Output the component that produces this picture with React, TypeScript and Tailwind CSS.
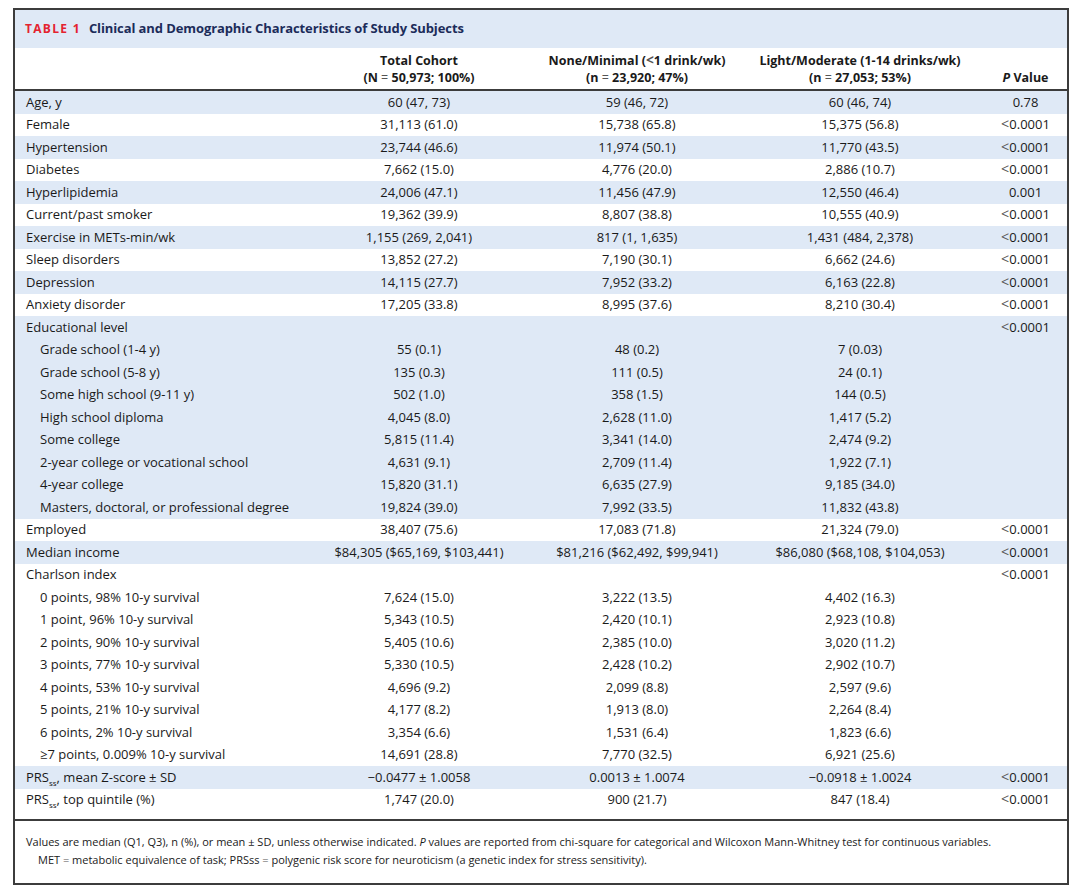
import React from "react";

type Row = { label: React.ReactNode; v: string[]; p?: string; sub?: boolean };
type Group = { rows: Row[] };

const LT = () => <span className="text-[#555] text-[1.1em] leading-none">&lt;</span>;

const PRS = () => (
  <>
    PRS<sub className="text-[8px] align-[-2px]">ss</sub>
  </>
);

const groups: Group[] = [
  { rows: [{ label: "Age, y", v: ["60 (47, 73)", "59 (46, 72)", "60 (46, 74)"], p: "0.78" }] },
  { rows: [{ label: "Female", v: ["31,113 (61.0)", "15,738 (65.8)", "15,375 (56.8)"], p: "<0.0001" }] },
  { rows: [{ label: "Hypertension", v: ["23,744 (46.6)", "11,974 (50.1)", "11,770 (43.5)"], p: "<0.0001" }] },
  { rows: [{ label: "Diabetes", v: ["7,662 (15.0)", "4,776 (20.0)", "2,886 (10.7)"], p: "<0.0001" }] },
  { rows: [{ label: "Hyperlipidemia", v: ["24,006 (47.1)", "11,456 (47.9)", "12,550 (46.4)"], p: "0.001" }] },
  { rows: [{ label: "Current/past smoker", v: ["19,362 (39.9)", "8,807 (38.8)", "10,555 (40.9)"], p: "<0.0001" }] },
  { rows: [{ label: "Exercise in METs-min/wk", v: ["1,155 (269, 2,041)", "817 (1, 1,635)", "1,431 (484, 2,378)"], p: "<0.0001" }] },
  { rows: [{ label: "Sleep disorders", v: ["13,852 (27.2)", "7,190 (30.1)", "6,662 (24.6)"], p: "<0.0001" }] },
  { rows: [{ label: "Depression", v: ["14,115 (27.7)", "7,952 (33.2)", "6,163 (22.8)"], p: "<0.0001" }] },
  { rows: [{ label: "Anxiety disorder", v: ["17,205 (33.8)", "8,995 (37.6)", "8,210 (30.4)"], p: "<0.0001" }] },
  {
    rows: [
      { label: "Educational level", v: ["", "", ""], p: "<0.0001" },
      { label: "Grade school (1-4 y)", v: ["55 (0.1)", "48 (0.2)", "7 (0.03)"], sub: true },
      { label: "Grade school (5-8 y)", v: ["135 (0.3)", "111 (0.5)", "24 (0.1)"], sub: true },
      { label: "Some high school (9-11 y)", v: ["502 (1.0)", "358 (1.5)", "144 (0.5)"], sub: true },
      { label: "High school diploma", v: ["4,045 (8.0)", "2,628 (11.0)", "1,417 (5.2)"], sub: true },
      { label: "Some college", v: ["5,815 (11.4)", "3,341 (14.0)", "2,474 (9.2)"], sub: true },
      { label: "2-year college or vocational school", v: ["4,631 (9.1)", "2,709 (11.4)", "1,922 (7.1)"], sub: true },
      { label: "4-year college", v: ["15,820 (31.1)", "6,635 (27.9)", "9,185 (34.0)"], sub: true },
      { label: "Masters, doctoral, or professional degree", v: ["19,824 (39.0)", "7,992 (33.5)", "11,832 (43.8)"], sub: true },
    ],
  },
  { rows: [{ label: "Employed", v: ["38,407 (75.6)", "17,083 (71.8)", "21,324 (79.0)"], p: "<0.0001" }] },
  { rows: [{ label: "Median income", v: ["$84,305 ($65,169, $103,441)", "$81,216 ($62,492, $99,941)", "$86,080 ($68,108, $104,053)"], p: "<0.0001" }] },
  {
    rows: [
      { label: "Charlson index", v: ["", "", ""], p: "<0.0001" },
      { label: "0 points, 98% 10-y survival", v: ["7,624 (15.0)", "3,222 (13.5)", "4,402 (16.3)"], sub: true },
      { label: "1 point, 96% 10-y survival", v: ["5,343 (10.5)", "2,420 (10.1)", "2,923 (10.8)"], sub: true },
      { label: "2 points, 90% 10-y survival", v: ["5,405 (10.6)", "2,385 (10.0)", "3,020 (11.2)"], sub: true },
      { label: "3 points, 77% 10-y survival", v: ["5,330 (10.5)", "2,428 (10.2)", "2,902 (10.7)"], sub: true },
      { label: "4 points, 53% 10-y survival", v: ["4,696 (9.2)", "2,099 (8.8)", "2,597 (9.6)"], sub: true },
      { label: "5 points, 21% 10-y survival", v: ["4,177 (8.2)", "1,913 (8.0)", "2,264 (8.4)"], sub: true },
      { label: "6 points, 2% 10-y survival", v: ["3,354 (6.6)", "1,531 (6.4)", "1,823 (6.6)"], sub: true },
      { label: "≥7 points, 0.009% 10-y survival", v: ["14,691 (28.8)", "7,770 (32.5)", "6,921 (25.6)"], sub: true },
    ],
  },
  {
    rows: [
      {
        label: (
          <>
            <PRS />, mean Z-score ± SD
          </>
        ),
        v: ["−0.0477 ± 1.0058", "0.0013 ± 1.0074", "−0.0918 ± 1.0024"],
        p: "<0.0001",
      },
    ],
  },
  {
    rows: [
      {
        label: (
          <>
            <PRS />, top quintile (%)
          </>
        ),
        v: ["1,747 (20.0)", "900 (21.7)", "847 (18.4)"],
        p: "<0.0001",
      },
    ],
  },
];

const renderP = (p?: string) => {
  if (!p) return "";
  if (p.startsWith("<"))
    return (
      <>
        <LT />
        {p.slice(1)}
      </>
    );
  return p;
};

const GRID = "grid grid-cols-[291px_226px_210px_236px_1fr]";

export default function App() {
  return (
    <div
      className="w-[1080px] h-[894px] bg-white pl-[13px] pt-[8px] text-[#1a1a1a]"
      style={{ fontFamily: '"Open Sans", "Noto Sans", sans-serif' }}
    >
      <div className="w-[1056px] h-[877px] border-2 border-[#3c3c3c] flex flex-col">
        <div className="h-[38px] bg-[#dfe9f6] flex items-center pl-[10px] gap-[8px]">
          <span className="text-[#e4232f] font-bold text-[12px] tracking-[1.3px]">TABLE 1</span>
          <span className="text-[#1c2c5a] font-bold text-[13px] tracking-[-0.1px]">
            Clinical and Demographic Characteristics of Study Subjects
          </span>
        </div>
        <div className={`${GRID} h-[43px] border-b-2 border-[#3c3c3c] text-[12.5px] font-bold leading-[17px] items-end pb-[3px]`}>
          <div />
          <div className="text-center">
            Total Cohort
            <br />
            (N <span className="font-normal text-[#555]">=</span> 50,973; 100%)
          </div>
          <div className="text-center">
            None/Minimal (<LT />1 drink/wk)
            <br />
            (n <span className="font-normal text-[#555]">=</span> 23,920; 47%)
          </div>
          <div className="text-center">
            Light/Moderate (1-14 drinks/wk)
            <br />
            (n <span className="font-normal text-[#555]">=</span> 27,053; 53%)
          </div>
          <div className="text-center pl-[6px]">
            <i>P</i> Value
          </div>
        </div>
        <div className="flex flex-col text-[13px]">
          {groups.map((g, gi) => (
            <div key={gi} className={gi % 2 === 0 ? "bg-[#dfe9f6]" : "bg-white"}>
              {g.rows.map((r, ri) => (
                <div key={ri} className={`${GRID} h-[22.5px] items-center`}>
                  <div className={r.sub ? "pl-[25px]" : "pl-[11px]"}>{r.label}</div>
                  {r.v.map((x, i) => (
                    <div key={i} className="text-center">
                      {x}
                    </div>
                  ))}
                  <div className="text-center pl-[6px]">{renderP(r.p)}</div>
                </div>
              ))}
            </div>
          ))}
        </div>
        <div className="mt-[8px] border-t-2 border-[#3c3c3c] pt-[12px] pl-[11px] text-[11px] leading-[18px]">
          <div>
            Values are median (Q1, Q3), n (%), or mean ± SD, unless otherwise indicated. <i>P</i> values are reported from chi-square for categorical and Wilcoxon Mann-Whitney test for continuous variables.
          </div>
          <div className="pl-[12px]">
            MET <span className="text-[#555]">=</span> metabolic equivalence of task; PRSss <span className="text-[#555]">=</span> polygenic risk score for neuroticism (a genetic index for stress sensitivity).
          </div>
        </div>
      </div>
    </div>
  );
}
